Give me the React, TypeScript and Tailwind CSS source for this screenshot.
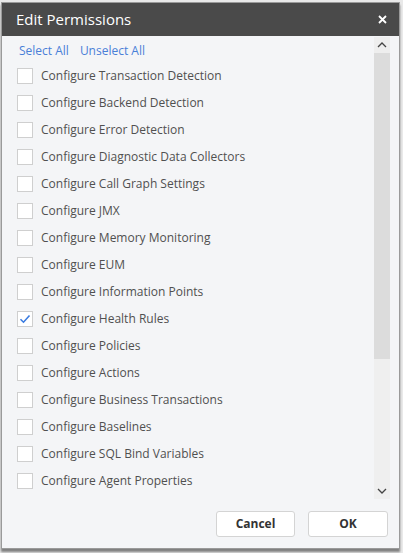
import React, { useState } from "react";

const permissions = [
  "Configure Transaction Detection",
  "Configure Backend Detection",
  "Configure Error Detection",
  "Configure Diagnostic Data Collectors",
  "Configure Call Graph Settings",
  "Configure JMX",
  "Configure Memory Monitoring",
  "Configure EUM",
  "Configure Information Points",
  "Configure Health Rules",
  "Configure Policies",
  "Configure Actions",
  "Configure Business Transactions",
  "Configure Baselines",
  "Configure SQL Bind Variables",
  "Configure Agent Properties",
];

const App: React.FC = () => {
  const [checked, setChecked] = useState<Record<string, boolean>>({
    "Configure Health Rules": true,
  });

  const toggle = (name: string) =>
    setChecked((prev) => ({ ...prev, [name]: !prev[name] }));

  return (
    <div
      className="w-[403px] h-[553px] bg-[#e9e9e9] pl-[1px] pt-[2px] overflow-hidden"
      style={{ fontFamily: '"Open Sans", "Noto Sans", sans-serif' }}
    >
      <div className="w-[399px] h-[547px] flex flex-col bg-[#f4f5f7] border border-[#9a9a9a] shadow-[0_3px_2px_rgba(0,0,0,0.45)]">
        {/* header */}
        <div className="h-[33px] shrink-0 bg-[#4a4a4a] flex items-center justify-between pl-[14px] pr-[12px]">
          <span className="text-[15px] text-white">Edit Permissions</span>
          <svg width="9" height="9" viewBox="0 0 9 9">
            <path d="M1 1 L8 8 M8 1 L1 8" stroke="#fff" strokeWidth="1.8" />
          </svg>
        </div>

        {/* scroll area */}
        <div className="flex h-[463px] shrink-0 pt-[1px]">
          <div className="flex-1 overflow-hidden pl-[15px]">
            <div className="flex gap-[11px] pt-[5px] pl-[2px] h-[25px] text-[12px] text-[#4a7fd8]">
              <span>Select All</span>
              <span>Unselect All</span>
            </div>
            <div className="flex flex-col">
              {permissions.map((p) => (
                <label
                  key={p}
                  onClick={() => toggle(p)}
                  className="h-[27px] flex items-center gap-[8px] cursor-pointer"
                >
                  <span className="w-[16px] h-[16px] bg-white border border-[#cfcfcf] flex items-center justify-center">
                    {checked[p] && (
                      <svg width="12" height="12" viewBox="0 0 12 12">
                        <path
                          d="M1.5 6.2 L4.5 9.2 L10.5 2.5"
                          fill="none"
                          stroke="#3a7be0"
                          strokeWidth="1.6"
                        />
                      </svg>
                    )}
                  </span>
                  <span className="text-[12px] text-[#505050]">{p}</span>
                </label>
              ))}
            </div>
          </div>

          {/* scrollbar */}
          <div className="w-[16px] mr-[9px] flex flex-col">
            <div className="h-[16px] bg-[#eeeeee] flex items-center justify-center">
              <svg width="10" height="6" viewBox="0 0 10 6">
                <path d="M1 5 L5 1 L9 5" fill="none" stroke="#444" strokeWidth="1.3" />
              </svg>
            </div>
            <div className="flex-1 flex flex-col bg-[#efefef]">
              <div className="h-[306px] bg-[#dcdcdc]" />
            </div>
            <div className="h-[16px] bg-[#efefef] flex items-center justify-center">
              <svg width="10" height="6" viewBox="0 0 10 6">
                <path d="M1 1 L5 5 L9 1" fill="none" stroke="#444" strokeWidth="1.3" />
              </svg>
            </div>
          </div>
        </div>

        {/* footer */}
        <div className="flex justify-end gap-[13px] pr-[11px] pt-[12px]">
          <button className="w-[79px] h-[26px] bg-white border border-[#d4d4d4] rounded-[3px] text-[12px] font-bold text-[#333]">
            Cancel
          </button>
          <button className="w-[80px] h-[26px] bg-white border border-[#d4d4d4] rounded-[3px] text-[12px] font-bold text-[#333]">
            OK
          </button>
        </div>
      </div>
    </div>
  );
};

export default App;
